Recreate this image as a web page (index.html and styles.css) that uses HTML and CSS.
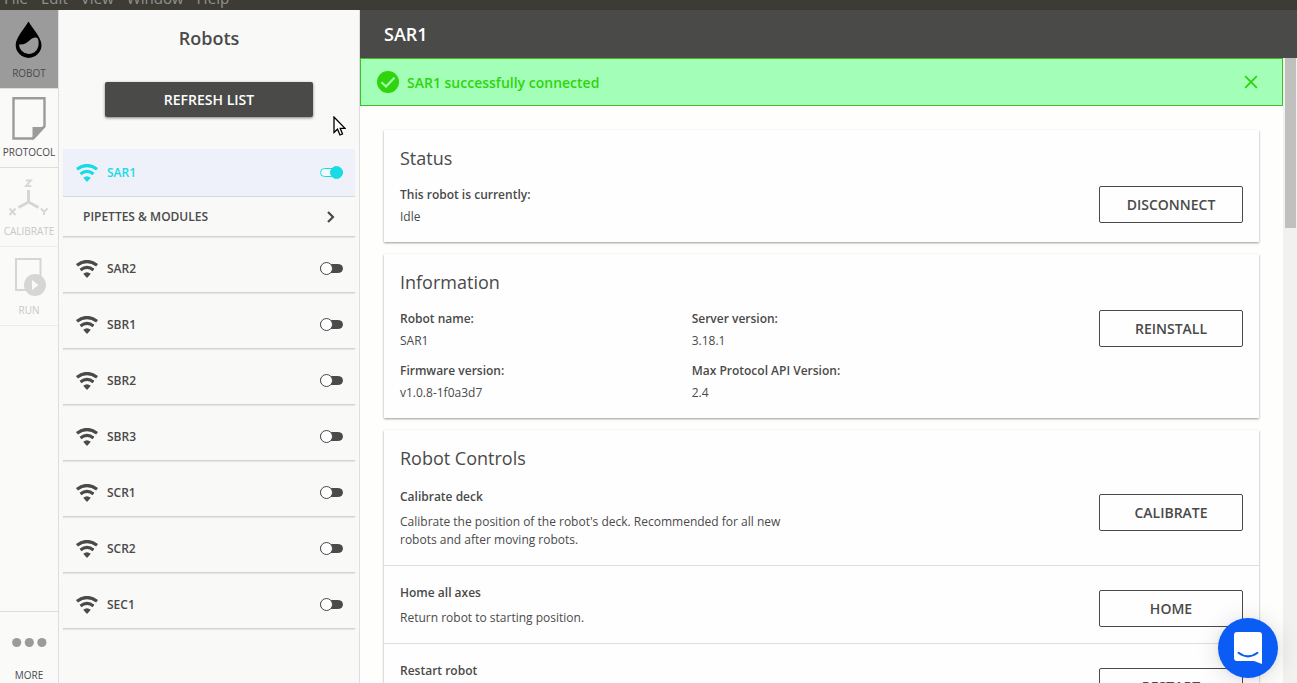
FILE: index.html
```html
<!DOCTYPE html>
<html lang="en">
<head>
<meta charset="utf-8">
<title>Robots</title>
<link rel="stylesheet" href="styles.css">
</head>
<body>
<svg class="defs" aria-hidden="true">
  <symbol id="wifi" viewBox="0 0 22 18">
    <path d="M0.900 5.300Q11-2.300 21.100 5.300" fill="none" stroke="currentColor" stroke-width="3.200"/>
    <path d="M4.500 9.900Q11 4.900 17.500 9.900" fill="none" stroke="currentColor" stroke-width="3.100"/>
    <path d="M7.200 13.700Q11 10.600 14.800 13.700L11 18Z" fill="currentColor"/>
  </symbol>
</svg>
<div class="menubar">
  <span>File</span><span>Edit</span><span>View</span><span>Window</span><span>Help</span>
</div>
<div class="app">
  <nav class="nav">
    <a class="nav-item active" href="#robot">
      <svg class="nav-icon" viewBox="0 0 42 42"><path d="M20.500 2.500C17.500 8 7.700 18.500 7.700 26a12.900 12.900 0 0 0 25.800 0C33.500 18.500 23.500 8 20.500 2.500Z" fill="#000"/><path d="M11 25.500C16 26 19 24 22 21C24.500 18.500 28.500 17.500 30 20C30.800 22 30.800 25 30.300 27.500A9.800 9.800 0 0 1 11 25.500Z" fill="#9b9b9b"/></svg>
      <span>ROBOT</span>
    </a>
    <a class="nav-item" href="#protocol">
      <svg class="nav-icon" viewBox="0 0 42 42"><path d="M5.500 0.300H36.500V28L24.500 40.500H5.500Z" fill="none" stroke="#9b9b9b" stroke-width="2.400"/><path d="M24.500 41.500V29H37.500L26 41.500Z" fill="#9b9b9b"/></svg>
      <span>PROTOCOL</span>
    </a>
    <a class="nav-item disabled" href="#calibrate" aria-disabled="true">
      <svg class="nav-icon" viewBox="0 0 42 42"><path d="M20.500 13V25M20.500 25L10.500 30.500M20.500 25L30.500 30.500" fill="none" stroke="#d6d6d6" stroke-width="3"/><path d="M18 3.500H22.800L18 9H23.200M1.500 31.500L7.500 38M7.500 31.500L1.500 38M33 31.500L36 34.800M39.500 31.500L36 34.800V38" fill="none" stroke="#d6d6d6" stroke-width="1.900"/></svg>
      <span>CALIBRATE</span>
    </a>
    <a class="nav-item disabled" href="#run" aria-disabled="true">
      <svg class="nav-icon" viewBox="0 0 42 42"><path d="M8 3H32.500V34H8Z" fill="none" stroke="#d6d6d6" stroke-width="2"/><circle cx="27" cy="29" r="11" fill="#d6d6d6"/><path d="M24 24L30.500 29L24 34Z" fill="#fafaf9"/></svg>
      <span>RUN</span>
    </a>
    <a class="nav-item more" href="#more">
      <svg class="nav-icon" viewBox="0 0 42 42"><g fill="#9b9b9b"><circle cx="8.700" cy="21.500" r="4.600"/><circle cx="21.300" cy="21.500" r="4.600"/><circle cx="33.900" cy="21.500" r="4.600"/></g></svg>
      <span>MORE</span>
    </a>
  </nav>

  <aside class="panel">
    <h2 class="panel-title">Robots</h2>
    <button class="refresh" type="button">REFRESH LIST</button>
    <ul class="robots">
      <li class="robot connected">
        <label class="robot-row"><svg class="wifi"><use href="#wifi"/></svg><span>SAR1</span><input class="toggle" type="checkbox" checked></label>
        <a class="modules" href="#modules"><span>PIPETTES &amp; MODULES</span><svg class="chevron" viewBox="0 0 8 12"><path d="M1 1L6 6L1 11" fill="none" stroke="currentColor" stroke-width="2.200"/></svg></a>
      </li>
      <li class="robot"><label class="robot-row"><svg class="wifi"><use href="#wifi"/></svg><span>SAR2</span><input class="toggle" type="checkbox"></label></li>
      <li class="robot"><label class="robot-row"><svg class="wifi"><use href="#wifi"/></svg><span>SBR1</span><input class="toggle" type="checkbox"></label></li>
      <li class="robot"><label class="robot-row"><svg class="wifi"><use href="#wifi"/></svg><span>SBR2</span><input class="toggle" type="checkbox"></label></li>
      <li class="robot"><label class="robot-row"><svg class="wifi"><use href="#wifi"/></svg><span>SBR3</span><input class="toggle" type="checkbox"></label></li>
      <li class="robot"><label class="robot-row"><svg class="wifi"><use href="#wifi"/></svg><span>SCR1</span><input class="toggle" type="checkbox"></label></li>
      <li class="robot"><label class="robot-row"><svg class="wifi"><use href="#wifi"/></svg><span>SCR2</span><input class="toggle" type="checkbox"></label></li>
      <li class="robot"><label class="robot-row"><svg class="wifi"><use href="#wifi"/></svg><span>SEC1</span><input class="toggle" type="checkbox"></label></li>
    </ul>
  </aside>

  <main class="main">
    <h1 class="titlebar">SAR1</h1>
    <div class="viewport">
      <div class="page">
        <div class="alert" role="status">
          <svg class="alert-icon" viewBox="0 0 22 22"><circle cx="11" cy="11" r="11" fill="#2fd40b"/><path d="M4.500 11.200L9 15.500L17.500 6.800" fill="none" stroke="#a3ffb8" stroke-width="2.200"/></svg>
          <span>SAR1 successfully connected</span>
          <button class="alert-close" type="button" aria-label="Close"><svg viewBox="0 0 14 14"><path d="M1.200 1.200L12.800 12.800M12.800 1.200L1.200 12.800" stroke="currentColor" stroke-width="1.800"/></svg></button>
        </div>
        <div class="cards">
          <section class="card">
            <h3 class="card-title">Status</h3>
            <div class="facts">
              <dl class="fact"><dt>This robot is currently:</dt><dd>Idle</dd></dl>
              <button class="outline" type="button">DISCONNECT</button>
            </div>
          </section>
          <section class="card">
            <h3 class="card-title">Information</h3>
            <div class="facts">
              <dl class="fact"><dt>Robot name:</dt><dd>SAR1</dd></dl>
              <dl class="fact"><dt>Server version:</dt><dd>3.18.1</dd></dl>
              <button class="outline" type="button">REINSTALL</button>
              <dl class="fact"><dt>Firmware version:</dt><dd>v1.0.8-1f0a3d7</dd></dl>
              <dl class="fact"><dt>Max Protocol API Version:</dt><dd>2.4</dd></dl>
            </div>
          </section>
          <section class="card">
            <h3 class="card-title">Robot Controls</h3>
            <div class="control">
              <div class="control-text"><h4>Calibrate deck</h4><p>Calibrate the position of the robot's deck. Recommended for all new robots and after moving robots.</p></div>
              <button class="outline" type="button">CALIBRATE</button>
            </div>
            <div class="control">
              <div class="control-text"><h4>Home all axes</h4><p>Return robot to starting position.</p></div>
              <button class="outline" type="button">HOME</button>
            </div>
            <div class="control">
              <div class="control-text"><h4>Restart robot</h4></div>
              <button class="outline" type="button">RESTART</button>
            </div>
          </section>
        </div>
      </div>
      <div class="scrollbar"><div class="thumb"></div></div>
    </div>
  </main>
</div>
<button class="chat" type="button" aria-label="Open chat"><svg viewBox="0 0 28 32"><path d="M3 0H25Q28 0 28 3V32L20 29H3Q0 29 0 26V3Q0 0 3 0Z" fill="#fff"/><path d="M4.500 20.800Q14 28 23.500 20.800" fill="none" stroke="#0a5cf5" stroke-width="2" stroke-linecap="round"/></svg></button>
<svg class="cursor" viewBox="0 0 13 20" aria-hidden="true"><path d="M1 1V16.500L4.500 13.200L7 19L9.500 18L7.200 12.300H12Z" fill="#fff" stroke="#000" stroke-width="1.300"/></svg>
</body>
</html>
```
FILE: styles.css
```css
*, *::before, *::after { box-sizing: border-box; }

body {
  margin: 0;
  height: 100vh;
  display: flex;
  flex-direction: column;
  overflow: hidden;
  position: relative;
  font-family: "Open Sans", "Noto Sans", sans-serif;
  font-size: 12px;
  color: #4a4a4a;
  background: #fefefd;
}

h1, h2, h3, h4, p, ul, dl, dd { margin: 0; padding: 0; }
button { font: inherit; color: inherit; cursor: pointer; }
a { color: inherit; text-decoration: none; }
svg { display: block; flex: none; }

.defs { position: absolute; width: 0; height: 0; }

.menubar {
  flex: none;
  display: flex;
  align-items: flex-end;
  gap: 13px;
  height: 10px;
  padding-left: 4px;
  overflow: hidden;
  background: #3c3b34;
  color: #8f8e88;
  font: 15px/24px "Noto Sans", sans-serif;
}

.app { flex: 1; display: flex; min-height: 0; }

.nav {
  flex: none;
  width: 59px;
  display: flex;
  flex-direction: column;
  border-right: 1px solid #dedede;
  background: #fafaf9;
}

.nav-item {
  flex: none;
  display: flex;
  flex-direction: column;
  align-items: center;
  gap: 4px;
  padding: 9px 0 7px;
  border-bottom: 1px solid #dedede;
  font-size: 10px;
  line-height: 16px;
}

.nav-icon { width: 42px; height: 42px; overflow: visible; }
.nav-item.active { background: #9b9b9b; }
.nav-item.disabled { color: #c8c8c8; border-color: #ececec; }
.nav-item.more { margin-top: auto; padding-bottom: 0; border-top: 1px solid #dedede; border-bottom: 0; }

.panel {
  flex: none;
  width: 301px;
  border-right: 1px solid #dedede;
  background: #f9f9f8;
  overflow: hidden;
}

.panel-title {
  padding: 16px 0;
  text-align: center;
  font-size: 18px;
  line-height: 24px;
  font-weight: 600;
}

.refresh {
  display: block;
  width: 208px;
  height: 35px;
  margin: 16px auto 32px;
  border: 0;
  border-radius: 2px;
  background: #4a4a48;
  color: #fff;
  font-size: 14px;
  font-weight: 600;
  box-shadow: 0 1px 3px rgba(0, 0, 0, 0.5);
}

.robots { list-style: none; margin: 0 4px; display: grid; gap: 8px; }
.robot { border-bottom: 1px solid #d4d4d4; box-shadow: 0 1px 1px #e6e6e6; font-weight: 600; }

.robot-row {
  display: flex;
  align-items: center;
  gap: 9px;
  height: 47px;
  padding: 0 12px 0 13px;
}

.connected .robot-row { background: #eef1fa; color: #19dbe4; }
.wifi { width: 22px; height: 18px; }

.toggle {
  appearance: none;
  position: relative;
  width: 23px;
  height: 13px;
  margin: 0 0 0 auto;
  color: inherit;
}

.toggle::before {
  content: "";
  position: absolute;
  inset: 2px 0;
  border: 1px solid currentColor;
  border-radius: 5px;
  background: currentColor;
}

.toggle::after {
  content: "";
  position: absolute;
  top: 0;
  left: 0;
  width: 13px;
  height: 13px;
  border: 1px solid currentColor;
  border-radius: 50%;
  background: #fff;
}

.toggle:checked::before { background: #f4fbff; }
.toggle:checked::after { left: 10px; background: currentColor; }

.modules {
  display: flex;
  align-items: center;
  justify-content: space-between;
  height: 40px;
  padding: 0 20px;
  border-top: 1px solid #d8d8d8;
}

.chevron { width: 8px; height: 12px; }

.main { flex: 1; min-width: 0; display: flex; flex-direction: column; }

.titlebar {
  flex: none;
  padding: 12px 24px;
  background: #4a4a48;
  color: #fff;
  font-size: 18px;
  line-height: 24px;
  font-weight: 600;
}

.viewport { flex: 1; display: flex; min-height: 0; }
.page { flex: 1; min-width: 0; overflow: hidden; }
.scrollbar { flex: none; width: 14px; padding: 0 1px 0 2px; background: #f1f1f0; }
.thumb { height: 170px; background: #c0c0bf; }

.alert {
  display: flex;
  align-items: center;
  gap: 8px;
  height: 48px;
  padding: 0 24px 0 16px;
  border: 1px solid #43bd27;
  background: #a3ffb8;
  color: #2fd40b;
  font-size: 14px;
  font-weight: 600;
}

.alert-icon { width: 22px; height: 22px; }
.alert-close { margin-left: auto; padding: 0; border: 0; background: none; }
.alert-close svg { width: 14px; height: 14px; }

.cards { display: grid; gap: 12px; padding: 24px; }
.card { background: #fefefe; box-shadow: 0 1px 2px rgba(0, 0, 0, 0.4); }

.card-title {
  padding: 16px 16px 0;
  font-size: 18px;
  line-height: 24px;
  font-weight: 400;
}

.facts {
  display: grid;
  grid-template-columns: repeat(3, 1fr);
  gap: 8px 32px;
  padding: 14px 16px;
  line-height: 22px;
}

.fact dt { font-weight: 600; }
.facts .outline { grid-column: 3; justify-self: end; margin-top: 2px; }

.outline {
  flex: none;
  width: 144px;
  height: 37px;
  border: 1px solid #4a4a4a;
  border-radius: 2px;
  background: transparent;
  font-size: 14px;
  font-weight: 600;
}

.control {
  display: flex;
  align-items: flex-start;
  justify-content: space-between;
  padding: 18px 16px 16px;
  line-height: 18px;
}

.control + .control { border-top: 1px solid #dedede; }
.control h4 { font-size: 12px; font-weight: 600; }
.control p { max-width: 400px; margin-top: 7px; }
.control .outline { margin-top: 6px; }

.chat {
  position: absolute;
  right: 19px;
  bottom: 5px;
  width: 60px;
  height: 60px;
  display: grid;
  place-items: center;
  padding: 0;
  border: 0;
  border-radius: 50%;
  background: #0a5cf5;
  box-shadow: 0 1px 6px rgba(0, 0, 0, 0.06), 0 2px 24px rgba(0, 0, 0, 0.14);
}

.chat svg { width: 28px; height: 32px; }

.cursor { position: absolute; left: 333px; top: 116px; width: 13px; height: 20px; }
```
